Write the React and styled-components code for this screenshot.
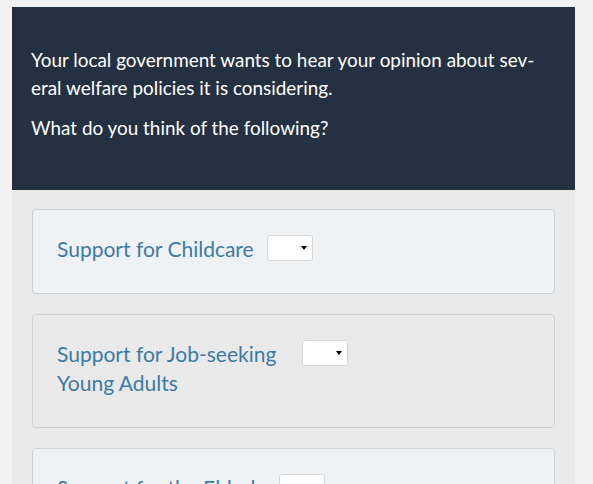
import React from 'react'
import styled, { createGlobalStyle } from 'styled-components'

const GlobalStyle = createGlobalStyle`
  html, body {
    margin: 0;
    padding: 0;
    background: #f2f2f2;
  }
  body {
    font-family: Lato, "Open Sans", sans-serif;
  }
`

const items = [
  'Support for Childcare',
  'Support for Job-seeking Young Adults',
  'Support for the Elderly',
]

function App() {
  return (
    <>
      <GlobalStyle />
      <Page>
        <Intro>
          <p>Your local government wants to hear your opinion about sev&shy;eral welfare policies it is considering.</p>
          <p>What do you think of the following?</p>
        </Intro>
        <Questions>
          {items.map((label, i) => (
            <Card key={label} $alt={i % 2 === 1}>
              <Label>{label}</Label>
              <SelectWrap>
                <Select defaultValue="">
                  <option value=""></option>
                  <option value="1">Oppose</option>
                  <option value="2">Neutral</option>
                  <option value="3">Support</option>
                </Select>
              </SelectWrap>
            </Card>
          ))}
        </Questions>
      </Page>
    </>
  )
}

export default App

const Page = styled.div`
  width: 563px;
  margin: 7px 0 0 12px;
`

const Intro = styled.div`
  background: #243142;
  color: #ffffff;
  padding: 39px 30px 48px 19px;
  font-size: 18.9px;
  line-height: 28px;
  hyphens: manual;

  p {
    margin: 0;
  }
  p + p {
    margin-top: 12px;
  }
`

const Questions = styled.div`
  background: #e9e9e9;
  padding: 19px 20px 20px;
  display: flex;
  flex-direction: column;
  gap: 20px;
`

const Card = styled.div`
  display: flex;
  align-items: flex-start;
  background: ${({ $alt }) => ($alt ? '#e9e9e9' : '#eff2f4')};
  border: 1px solid #cfd2d4;
  border-radius: 4px;
  padding: 24px 24px 30px;
`

const Label = styled.div`
  max-width: 232px;
  margin-right: 13px;
  color: #3d7ba5;
  font-size: 21px;
  line-height: 29px;
`

const SelectWrap = styled.span`
  position: relative;
  display: inline-block;
  margin-top: 1px;

  &::after {
    content: '';
    position: absolute;
    right: 6px;
    top: 11px;
    border-left: 3.5px solid transparent;
    border-right: 3.5px solid transparent;
    border-top: 4px solid #000;
    pointer-events: none;
  }
`

const Select = styled.select`
  appearance: none;
  -webkit-appearance: none;
  display: block;
  width: 46px;
  height: 26px;
  background: #ffffff;
  border: 1px solid #d6d6d6;
  border-radius: 3px;
  font-family: Lato, sans-serif;
  font-size: 14px;
  outline: none;
`
